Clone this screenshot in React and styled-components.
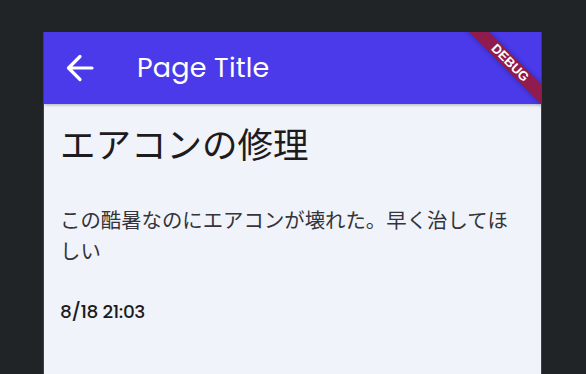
import React from 'react';
import styled, { createGlobalStyle } from 'styled-components';

const GlobalStyle = createGlobalStyle`
  html, body {
    margin: 0;
    padding: 0;
    background: #202427;
    overflow: hidden;
  }
`;

const Page = styled.div`
  box-sizing: border-box;
  height: 374px;
  padding: 32px 0 0 43px;
`;

const Frame = styled.div`
  background: #f0f3f9;
  border-left: 1px solid #3d4146;
  border-right: 1px solid #3d4146;
  height: 342px;
  overflow: hidden;
  position: relative;
  width: 497px;
`;

const AppBar = styled.header`
  align-items: center;
  background: #4a3aea;
  box-shadow: 0 1px 3px rgba(0, 0, 0, 0.28);
  display: flex;
  height: 72px;
  position: relative;
  z-index: 1;
`;

const BackButton = styled.button`
  align-items: center;
  background: transparent;
  border: none;
  cursor: pointer;
  display: flex;
  height: 72px;
  justify-content: center;
  padding: 0;
  width: 72px;
`;

const Title = styled.h1`
  color: #ffffff;
  font-family: 'Poppins', 'Inter', sans-serif;
  font-size: 27px;
  font-weight: 400;
  letter-spacing: 0.2px;
  margin: 0 0 0 21px;
`;

const DebugBanner = styled.div`
  background: rgba(160, 20, 40, 0.8);
  box-shadow: 0 0 5px rgba(0, 0, 0, 0.3);
  color: #ffffff;
  font-family: 'Liberation Sans', sans-serif;
  font-size: 13px;
  font-weight: 900;
  height: 14px;
  line-height: 14px;
  position: absolute;
  right: -39px;
  text-align: center;
  top: 24px;
  transform: rotate(45deg);
  width: 140px;
  z-index: 2;
`;

const Content = styled.main`
  padding: 17px 16px 0;
`;

const Heading = styled.h2`
  color: #1d1b20;
  font-family: 'Noto Sans CJK JP', sans-serif;
  font-size: 35.5px;
  font-weight: 400;
  line-height: 44px;
  margin: 0;
`;

const Body = styled.p`
  color: #34343a;
  font-family: 'Noto Sans CJK JP', sans-serif;
  font-size: 20.4px;
  line-height: 30.6px;
  margin: 39px 0 0;
`;

const Timestamp = styled.div`
  color: #1d1b20;
  font-family: 'Poppins', 'Inter', sans-serif;
  font-size: 18.5px;
  font-weight: 500;
  letter-spacing: -0.4px;
  margin-top: 33px;
`;

function BackArrow() {
  return (
    <svg width="30" height="28" viewBox="0 0 30 28" fill="none">
      <path
        d="M27 14H4M15 2.5L3.5 14L15 25.5"
        stroke="#ffffff"
        strokeWidth="3.2"
        strokeLinecap="round"
        strokeLinejoin="round"
      />
    </svg>
  );
}

export default function App() {
  return (
    <>
      <GlobalStyle />
      <Page>
        <Frame>
          <AppBar>
            <BackButton aria-label="back">
              <BackArrow />
            </BackButton>
            <Title>Page Title</Title>
          </AppBar>
          <DebugBanner>DEBUG</DebugBanner>
          <Content>
            <Heading>エアコンの修理</Heading>
            <Body>この酷暑なのにエアコンが壊れた。早く治してほしい</Body>
            <Timestamp>8/18 21:03</Timestamp>
          </Content>
        </Frame>
      </Page>
    </>
  );
}
